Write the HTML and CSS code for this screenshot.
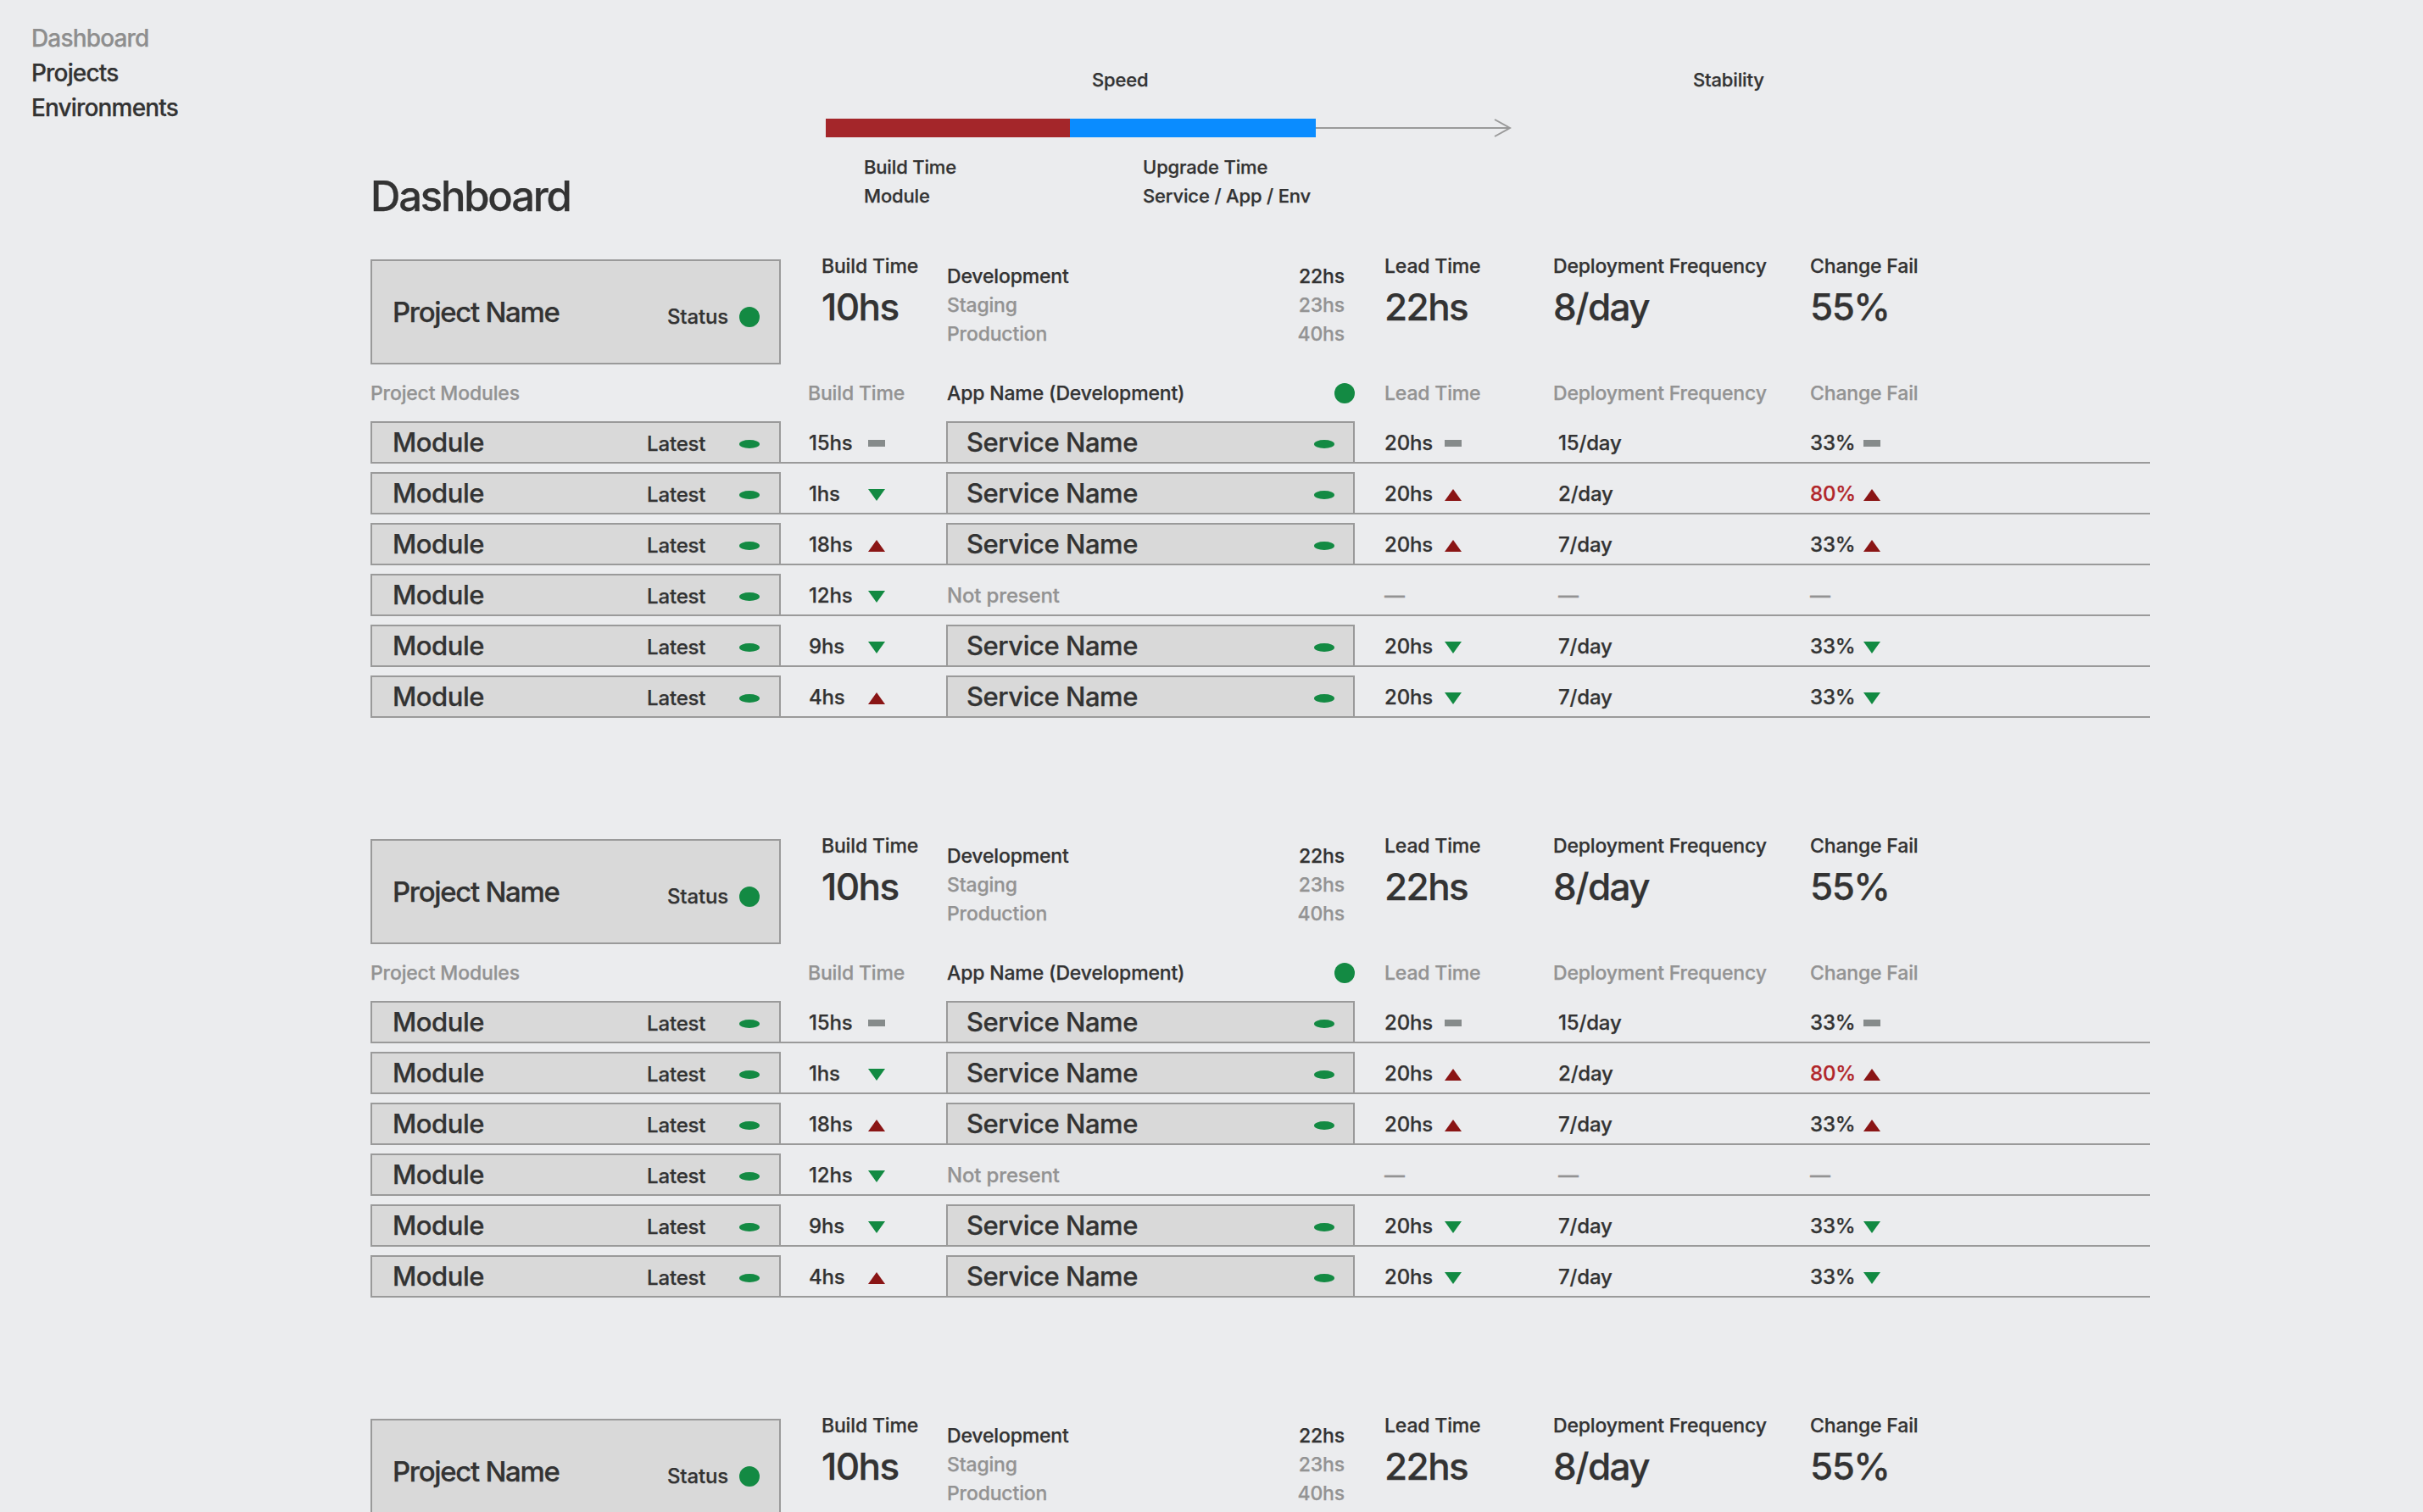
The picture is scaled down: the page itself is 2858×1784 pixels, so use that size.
FILE: index.html
```
<!DOCTYPE html>
<html lang="en">
<head>
<meta charset="utf-8">
<title>Dashboard</title>
<link rel="stylesheet" href="styles.css">
</head>
<body>
<div class="app">
  <nav class="sidebar">
    <a class="nav-item muted">Dashboard</a>
    <a class="nav-item">Projects</a>
    <a class="nav-item">Environments</a>
  </nav>
  <main class="main">
    <header class="page-header">
      <h1 class="title">Dashboard</h1>
      <div class="chart">
        <div class="chart-titles"><span class="ct-speed">Speed</span><span>Stability</span></div>
        <div class="chart-bar">
          <span class="bar-red"></span><span class="bar-blue"></span>
          <svg class="arrow" width="231" height="22" viewBox="0 0 231 22"><line x1="0" y1="11" x2="229" y2="11" stroke="#9a9a9a" stroke-width="2"/><polyline points="211,1 229,11 211,21" fill="none" stroke="#9a9a9a" stroke-width="2"/></svg>
        </div>
        <div class="chart-labels">
          <div class="cl cl-build">Build Time<br>Module</div>
          <div class="cl">Upgrade Time<br>Service / App / Env</div>
        </div>
      </div>
    </header>

    <section class="project">
      <div class="summary grid">
        <div class="pbox"><span class="pname">Project Name</span><span class="pstatus"><span class="plabel">Status</span><span class="dot"></span></span></div>
        <div class="metric m-build"><div class="mlabel">Build Time</div><div class="mvalue">10hs</div></div>
        <div class="envs">
          <div class="env"><span>Development</span><span>22hs</span></div>
          <div class="env muted"><span>Staging</span><span>23hs</span></div>
          <div class="env muted"><span>Production</span><span>40hs</span></div>
        </div>
        <div class="metric m-lead"><div class="mlabel">Lead Time</div><div class="mvalue">22hs</div></div>
        <div class="metric"><div class="mlabel">Deployment Frequency</div><div class="mvalue">8/day</div></div>
        <div class="metric"><div class="mlabel">Change Fail</div><div class="mvalue">55%</div></div>
      </div>
      <div class="colhead grid">
        <div class="h muted">Project Modules</div>
        <div class="h h-build muted">Build Time</div>
        <div class="h h-app"><span>App Name (Development)</span><span class="dot"></span></div>
        <div class="h h-lead muted">Lead Time</div>
        <div class="h muted">Deployment Frequency</div>
        <div class="h muted">Change Fail</div>
      </div>
      <div class="row grid">
        <div class="mbox"><span class="mname">Module</span><span class="mtag">Latest</span><span class="pill"></span></div>
        <div class="cell c-build"><span class="val vb">15hs</span><svg class="ind" width="20" height="14" viewBox="0 0 20 14"><rect x="0" y="2" width="20" height="8" fill="#868b8b"/></svg></div>
        <div class="sbox"><span class="sname">Service Name</span><span class="pill"></span></div>
        <div class="cell c-lead"><span class="val vl">20hs</span><svg class="ind" width="20" height="14" viewBox="0 0 20 14"><rect x="0" y="2" width="20" height="8" fill="#868b8b"/></svg></div>
        <div class="cell c-dep">15/day</div>
        <div class="cell"><span class="val vc">33%</span><svg class="ind" width="20" height="14" viewBox="0 0 20 14"><rect x="0" y="2" width="20" height="8" fill="#868b8b"/></svg></div>
      </div>
      <div class="row grid">
        <div class="mbox"><span class="mname">Module</span><span class="mtag">Latest</span><span class="pill"></span></div>
        <div class="cell c-build"><span class="val vb">1hs</span><svg class="ind" width="20" height="14" viewBox="0 0 20 14"><polygon points="0,0 20,0 10,14" fill="#128a42"/></svg></div>
        <div class="sbox"><span class="sname">Service Name</span><span class="pill"></span></div>
        <div class="cell c-lead"><span class="val vl">20hs</span><svg class="ind" width="20" height="14" viewBox="0 0 20 14"><polygon points="10,0 20,14 0,14" fill="#8a1515"/></svg></div>
        <div class="cell c-dep">2/day</div>
        <div class="cell"><span class="val vc bad">80%</span><svg class="ind" width="20" height="14" viewBox="0 0 20 14"><polygon points="10,0 20,14 0,14" fill="#8a1515"/></svg></div>
      </div>
      <div class="row grid">
        <div class="mbox"><span class="mname">Module</span><span class="mtag">Latest</span><span class="pill"></span></div>
        <div class="cell c-build"><span class="val vb">18hs</span><svg class="ind" width="20" height="14" viewBox="0 0 20 14"><polygon points="10,0 20,14 0,14" fill="#8a1515"/></svg></div>
        <div class="sbox"><span class="sname">Service Name</span><span class="pill"></span></div>
        <div class="cell c-lead"><span class="val vl">20hs</span><svg class="ind" width="20" height="14" viewBox="0 0 20 14"><polygon points="10,0 20,14 0,14" fill="#8a1515"/></svg></div>
        <div class="cell c-dep">7/day</div>
        <div class="cell"><span class="val vc">33%</span><svg class="ind" width="20" height="14" viewBox="0 0 20 14"><polygon points="10,0 20,14 0,14" fill="#8a1515"/></svg></div>
      </div>
      <div class="row grid">
        <div class="mbox"><span class="mname">Module</span><span class="mtag">Latest</span><span class="pill"></span></div>
        <div class="cell c-build"><span class="val vb">12hs</span><svg class="ind" width="20" height="14" viewBox="0 0 20 14"><polygon points="0,0 20,0 10,14" fill="#128a42"/></svg></div>
        <div class="cell c-none muted">Not present</div>
        <div class="cell c-lead muted">—</div>
        <div class="cell c-dep muted">—</div>
        <div class="cell muted">—</div>
      </div>
      <div class="row grid">
        <div class="mbox"><span class="mname">Module</span><span class="mtag">Latest</span><span class="pill"></span></div>
        <div class="cell c-build"><span class="val vb">9hs</span><svg class="ind" width="20" height="14" viewBox="0 0 20 14"><polygon points="0,0 20,0 10,14" fill="#128a42"/></svg></div>
        <div class="sbox"><span class="sname">Service Name</span><span class="pill"></span></div>
        <div class="cell c-lead"><span class="val vl">20hs</span><svg class="ind" width="20" height="14" viewBox="0 0 20 14"><polygon points="0,0 20,0 10,14" fill="#128a42"/></svg></div>
        <div class="cell c-dep">7/day</div>
        <div class="cell"><span class="val vc">33%</span><svg class="ind" width="20" height="14" viewBox="0 0 20 14"><polygon points="0,0 20,0 10,14" fill="#128a42"/></svg></div>
      </div>
      <div class="row grid">
        <div class="mbox"><span class="mname">Module</span><span class="mtag">Latest</span><span class="pill"></span></div>
        <div class="cell c-build"><span class="val vb">4hs</span><svg class="ind" width="20" height="14" viewBox="0 0 20 14"><polygon points="10,0 20,14 0,14" fill="#8a1515"/></svg></div>
        <div class="sbox"><span class="sname">Service Name</span><span class="pill"></span></div>
        <div class="cell c-lead"><span class="val vl">20hs</span><svg class="ind" width="20" height="14" viewBox="0 0 20 14"><polygon points="0,0 20,0 10,14" fill="#128a42"/></svg></div>
        <div class="cell c-dep">7/day</div>
        <div class="cell"><span class="val vc">33%</span><svg class="ind" width="20" height="14" viewBox="0 0 20 14"><polygon points="0,0 20,0 10,14" fill="#128a42"/></svg></div>
      </div>
    </section>

    <section class="project">
      <div class="summary grid">
        <div class="pbox"><span class="pname">Project Name</span><span class="pstatus"><span class="plabel">Status</span><span class="dot"></span></span></div>
        <div class="metric m-build"><div class="mlabel">Build Time</div><div class="mvalue">10hs</div></div>
        <div class="envs">
          <div class="env"><span>Development</span><span>22hs</span></div>
          <div class="env muted"><span>Staging</span><span>23hs</span></div>
          <div class="env muted"><span>Production</span><span>40hs</span></div>
        </div>
        <div class="metric m-lead"><div class="mlabel">Lead Time</div><div class="mvalue">22hs</div></div>
        <div class="metric"><div class="mlabel">Deployment Frequency</div><div class="mvalue">8/day</div></div>
        <div class="metric"><div class="mlabel">Change Fail</div><div class="mvalue">55%</div></div>
      </div>
      <div class="colhead grid">
        <div class="h muted">Project Modules</div>
        <div class="h h-build muted">Build Time</div>
        <div class="h h-app"><span>App Name (Development)</span><span class="dot"></span></div>
        <div class="h h-lead muted">Lead Time</div>
        <div class="h muted">Deployment Frequency</div>
        <div class="h muted">Change Fail</div>
      </div>
      <div class="row grid">
        <div class="mbox"><span class="mname">Module</span><span class="mtag">Latest</span><span class="pill"></span></div>
        <div class="cell c-build"><span class="val vb">15hs</span><svg class="ind" width="20" height="14" viewBox="0 0 20 14"><rect x="0" y="2" width="20" height="8" fill="#868b8b"/></svg></div>
        <div class="sbox"><span class="sname">Service Name</span><span class="pill"></span></div>
        <div class="cell c-lead"><span class="val vl">20hs</span><svg class="ind" width="20" height="14" viewBox="0 0 20 14"><rect x="0" y="2" width="20" height="8" fill="#868b8b"/></svg></div>
        <div class="cell c-dep">15/day</div>
        <div class="cell"><span class="val vc">33%</span><svg class="ind" width="20" height="14" viewBox="0 0 20 14"><rect x="0" y="2" width="20" height="8" fill="#868b8b"/></svg></div>
      </div>
      <div class="row grid">
        <div class="mbox"><span class="mname">Module</span><span class="mtag">Latest</span><span class="pill"></span></div>
        <div class="cell c-build"><span class="val vb">1hs</span><svg class="ind" width="20" height="14" viewBox="0 0 20 14"><polygon points="0,0 20,0 10,14" fill="#128a42"/></svg></div>
        <div class="sbox"><span class="sname">Service Name</span><span class="pill"></span></div>
        <div class="cell c-lead"><span class="val vl">20hs</span><svg class="ind" width="20" height="14" viewBox="0 0 20 14"><polygon points="10,0 20,14 0,14" fill="#8a1515"/></svg></div>
        <div class="cell c-dep">2/day</div>
        <div class="cell"><span class="val vc bad">80%</span><svg class="ind" width="20" height="14" viewBox="0 0 20 14"><polygon points="10,0 20,14 0,14" fill="#8a1515"/></svg></div>
      </div>
      <div class="row grid">
        <div class="mbox"><span class="mname">Module</span><span class="mtag">Latest</span><span class="pill"></span></div>
        <div class="cell c-build"><span class="val vb">18hs</span><svg class="ind" width="20" height="14" viewBox="0 0 20 14"><polygon points="10,0 20,14 0,14" fill="#8a1515"/></svg></div>
        <div class="sbox"><span class="sname">Service Name</span><span class="pill"></span></div>
        <div class="cell c-lead"><span class="val vl">20hs</span><svg class="ind" width="20" height="14" viewBox="0 0 20 14"><polygon points="10,0 20,14 0,14" fill="#8a1515"/></svg></div>
        <div class="cell c-dep">7/day</div>
        <div class="cell"><span class="val vc">33%</span><svg class="ind" width="20" height="14" viewBox="0 0 20 14"><polygon points="10,0 20,14 0,14" fill="#8a1515"/></svg></div>
      </div>
      <div class="row grid">
        <div class="mbox"><span class="mname">Module</span><span class="mtag">Latest</span><span class="pill"></span></div>
        <div class="cell c-build"><span class="val vb">12hs</span><svg class="ind" width="20" height="14" viewBox="0 0 20 14"><polygon points="0,0 20,0 10,14" fill="#128a42"/></svg></div>
        <div class="cell c-none muted">Not present</div>
        <div class="cell c-lead muted">—</div>
        <div class="cell c-dep muted">—</div>
        <div class="cell muted">—</div>
      </div>
      <div class="row grid">
        <div class="mbox"><span class="mname">Module</span><span class="mtag">Latest</span><span class="pill"></span></div>
        <div class="cell c-build"><span class="val vb">9hs</span><svg class="ind" width="20" height="14" viewBox="0 0 20 14"><polygon points="0,0 20,0 10,14" fill="#128a42"/></svg></div>
        <div class="sbox"><span class="sname">Service Name</span><span class="pill"></span></div>
        <div class="cell c-lead"><span class="val vl">20hs</span><svg class="ind" width="20" height="14" viewBox="0 0 20 14"><polygon points="0,0 20,0 10,14" fill="#128a42"/></svg></div>
        <div class="cell c-dep">7/day</div>
        <div class="cell"><span class="val vc">33%</span><svg class="ind" width="20" height="14" viewBox="0 0 20 14"><polygon points="0,0 20,0 10,14" fill="#128a42"/></svg></div>
      </div>
      <div class="row grid">
        <div class="mbox"><span class="mname">Module</span><span class="mtag">Latest</span><span class="pill"></span></div>
        <div class="cell c-build"><span class="val vb">4hs</span><svg class="ind" width="20" height="14" viewBox="0 0 20 14"><polygon points="10,0 20,14 0,14" fill="#8a1515"/></svg></div>
        <div class="sbox"><span class="sname">Service Name</span><span class="pill"></span></div>
        <div class="cell c-lead"><span class="val vl">20hs</span><svg class="ind" width="20" height="14" viewBox="0 0 20 14"><polygon points="0,0 20,0 10,14" fill="#128a42"/></svg></div>
        <div class="cell c-dep">7/day</div>
        <div class="cell"><span class="val vc">33%</span><svg class="ind" width="20" height="14" viewBox="0 0 20 14"><polygon points="0,0 20,0 10,14" fill="#128a42"/></svg></div>
      </div>
    </section>

    <section class="project">
      <div class="summary grid">
        <div class="pbox"><span class="pname">Project Name</span><span class="pstatus"><span class="plabel">Status</span><span class="dot"></span></span></div>
        <div class="metric m-build"><div class="mlabel">Build Time</div><div class="mvalue">10hs</div></div>
        <div class="envs">
          <div class="env"><span>Development</span><span>22hs</span></div>
          <div class="env muted"><span>Staging</span><span>23hs</span></div>
          <div class="env muted"><span>Production</span><span>40hs</span></div>
        </div>
        <div class="metric m-lead"><div class="mlabel">Lead Time</div><div class="mvalue">22hs</div></div>
        <div class="metric"><div class="mlabel">Deployment Frequency</div><div class="mvalue">8/day</div></div>
        <div class="metric"><div class="mlabel">Change Fail</div><div class="mvalue">55%</div></div>
      </div>
    </section>
  </main>
</div>
</body>
</html>
```

FILE: styles.css
```
* { box-sizing: border-box; margin: 0; padding: 0; }

body {
  background: #ebecee;
  font-family: Inter, "Liberation Sans", sans-serif;
  font-weight: 500;
  color: #333333;
  letter-spacing: -0.01em;
  -webkit-text-stroke: 0.25px currentColor;
}

.muted { color: #939393; }

.app { display: flex; }

.sidebar {
  width: 437px;
  flex: none;
  padding: 25px 0 0 37px;
  display: flex;
  flex-direction: column;
}
.nav-item { font-size: 28px; line-height: 41px; color: #333; letter-spacing: -0.03em; }
.nav-item.muted { color: #8e8e8e; }

.main { width: 2099px; flex: none; padding-top: 79px; }

/* header + chart */
.page-header { display: grid; grid-template-columns: 537px auto; align-items: end; }
.title { font-size: 49px; line-height: 49px; font-weight: 500; letter-spacing: -0.045em; }
.chart { font-size: 22px; }
.chart-titles { display: flex; padding-left: 314px; line-height: 30px; }
.ct-speed { width: 709px; }
.chart-bar { display: flex; margin-top: 31px; height: 22px; }
.bar-red { width: 288px; background: #a4262a; }
.bar-blue { width: 290px; background: #0a8cff; }
.arrow { display: block; }
.chart-labels { display: flex; padding-left: 45px; margin-top: 18px; padding-bottom: 8px; line-height: 34px; }
.cl-build { width: 329px; }

/* project block */
.project { margin-top: 143px; }
.page-header + .project { margin-top: 50px; }

.grid { display: grid; grid-template-columns: 484px 195px 482px 234px 303px 401px; }

.summary { height: 124px; align-items: start; }
.pbox {
  height: 124px;
  background: #d9d9d9;
  border: 2px solid #9a9a9a;
  display: flex;
  align-items: center;
  padding: 0 23px 0 24px;
}
.pname { flex: 1; font-size: 33px; line-height: 33px; letter-spacing: -0.04em; }
.pstatus { display: flex; align-items: center; padding-top: 11px; }
.plabel { width: 85px; font-size: 24px; line-height: 24px; }
.dot { width: 24px; height: 24px; border-radius: 50%; background: #138a43; flex: none; }

.metric { font-size: 23px; }
.m-build { padding-left: 48px; }
.m-lead { padding-left: 35px; }
.mlabel { line-height: 16px; }
.mvalue { font-size: 44px; line-height: 80px; letter-spacing: -0.035em; }

.envs { padding: 3px 12px 0 1px; font-size: 23px; line-height: 34px; }
.env { display: flex; justify-content: space-between; }

.colhead { height: 57px; align-items: end; padding-bottom: 11px; font-size: 23px; line-height: 23px; }
.h-build { padding-left: 32px; }
.h-app { display: flex; justify-content: space-between; align-items: flex-end; padding-left: 1px; color: #333; }
.h-lead { padding-left: 35px; }

.row {
  height: 60px;
  padding-top: 10px;
  grid-template-rows: 48px;
  border-bottom: 2px solid #9a9a9a;
}
.mbox, .sbox {
  height: 48px;
  background: #d9d9d9;
  border: 2px solid #9a9a9a;
  border-bottom: none;
  display: flex;
  align-items: center;
}
.mbox { padding: 0 23px 0 24px; }
.sbox { padding: 0 22px 0 22px; }
.mname, .sname { flex: 1; font-size: 31px; line-height: 46px; letter-spacing: -0.015em; }
.mtag { width: 109px; font-size: 24px; line-height: 46px; padding-top: 4px; }
.pill { width: 24px; height: 10px; border-radius: 50%; background: #138a43; flex: none; margin-top: 4px; }

.cell { font-size: 24px; line-height: 44px; padding-top: 4px; white-space: nowrap; }
.c-build { padding-left: 33px; }
.c-none { padding-left: 1px; }
.c-lead { padding-left: 35px; }
.c-dep { padding-left: 6px; }
.val { display: inline-block; }
.vb { width: 70px; }
.vl { width: 71px; }
.vc { width: 63px; }
.bad { color: #b1262a; }
.ind { vertical-align: baseline; }
```
